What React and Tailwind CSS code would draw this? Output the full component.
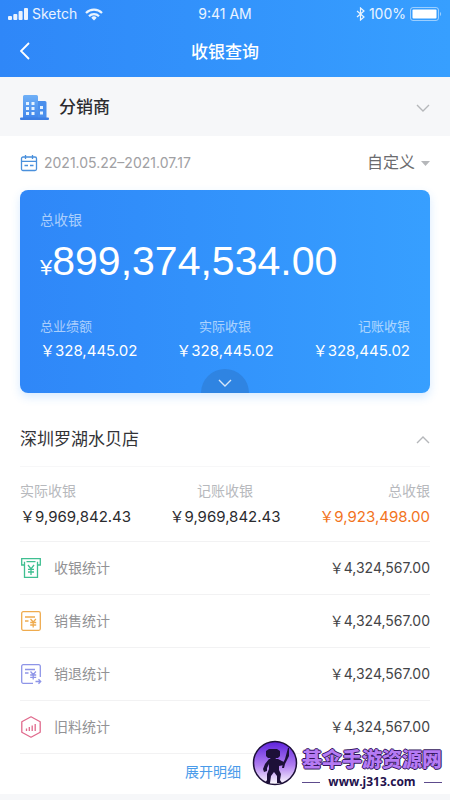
import React, { useState } from "react";

const cardStats = [
  { label: "总业绩额", value: "328,445.02", align: "items-start" },
  { label: "实际收银", value: "328,445.02", align: "items-center" },
  { label: "记账收银", value: "328,445.02", align: "items-end" },
];

const storeStats = [
  { label: "实际收银", value: "9,969,842.43", align: "items-start", color: "text-[#2b2b2e]" },
  { label: "记账收银", value: "9,969,842.43", align: "items-center", color: "text-[#2b2b2e]" },
  { label: "总收银", value: "9,923,498.00", align: "items-end", color: "text-[#f27321]" },
];

const CashIcon = () => (
  <svg width="22" height="22" viewBox="0 0 22 22" fill="none" stroke="#3fbf91" strokeWidth="1.3">
    <path d="M4.500 8H1.700V1.700h18.600V8h-2.800" />
    <path d="M4.500 4.700v15.600h13V4.700M6.500 4.700h9" />
    <path d="M8 8l3 4 3-4M11 12v6M8 12.300h6M8 15h6" />
  </svg>
);

const SaleIcon = () => (
  <svg width="22" height="22" viewBox="0 0 22 22" fill="none" stroke="#efab4e" strokeWidth="1.3">
    <rect x="1.700" y="1.700" width="18.600" height="18.600" rx="1.500" />
    <path d="M5 7h10M5 11h3.500" />
    <path d="M10.500 9l2.700 3 2.700-3M13.200 12v5.500M10.200 12.500h6M10.200 15h6" />
  </svg>
);

const ReturnIcon = () => (
  <svg width="22" height="22" viewBox="0 0 22 22" fill="none" stroke="#8e95e8" strokeWidth="1.3">
    <path d="M20.300 14V3.200a1.500 1.500 0 0 0-1.500-1.500H3.200a1.500 1.500 0 0 0-1.500 1.500v15.600a1.500 1.500 0 0 0 1.500 1.500H13" />
    <path d="M5 6.500h10M5 10h3.500" />
    <path d="M10.500 8.500l2.700 3 2.700-3M13.200 11.500v5M10.200 12h6M10.200 14.300h6" />
    <path d="M15.500 18.500h5M18.500 16.300l2.200 2.200-2.200 2.200" />
  </svg>
);

const OldIcon = () => (
  <svg width="22" height="22" viewBox="0 0 22 22" fill="none" stroke="#e0698c" strokeWidth="1.3" strokeLinejoin="round">
    <path d="M11 .8l9.200 4.900v10.600L11 21.200l-9.200-4.900V5.700z" />
    <path d="M6.500 12.500V15M9.300 11v4M12.200 9.500V15M15.200 8v7" />
  </svg>
);

const rows = [
  { label: "收银统计", value: "4,324,567.00", Icon: CashIcon },
  { label: "销售统计", value: "4,324,567.00", Icon: SaleIcon },
  { label: "销退统计", value: "4,324,567.00", Icon: ReturnIcon },
  { label: "旧料统计", value: "4,324,567.00", Icon: OldIcon },
];

const Chevron = ({ up, className }) => (
  <svg className={className} width="14" height="8" viewBox="0 0 14 8" fill="none" stroke="currentColor" strokeWidth="1.4">
    <path d={up ? "M1 7l6-6 6 6" : "M1 1l6 6 6-6"} />
  </svg>
);

const StatusBar = () => (
  <div className="grid grid-cols-3 items-center h-7 pl-2 pr-2 font-['Inter',sans-serif] text-sm text-white/90">
    <div className="flex items-center gap-1">
      <svg width="20" height="12" viewBox="0 0 20 12" fill="currentColor">
        <rect x="0" y="8" width="4" height="4" rx="1" />
        <rect x="5.300" y="6" width="4" height="6" rx="1" />
        <rect x="10.600" y="3" width="4" height="9" rx="1" />
        <rect x="16" y="0" width="4" height="12" rx="1" />
      </svg>
      <span>Sketch</span>
      <svg className="ml-1" width="18" height="13" viewBox="0 0 18 13" fill="none" stroke="currentColor" strokeWidth="2.200">
        <path d="M1 5a11.300 11.300 0 0 1 16 0M4 8.200a7 7 0 0 1 10 0" />
        <path d="M9 12.500l-2.700-2.800a3.800 3.800 0 0 1 5.400 0z" fill="currentColor" stroke="none" />
      </svg>
    </div>
    <span className="text-center">9:41 AM</span>
    <div className="flex items-center justify-end gap-1">
      <svg width="9" height="14" viewBox="0 0 9 14" fill="none" stroke="currentColor" strokeWidth="1.200">
        <path d="M1 4l7 6-3.500 3V1L8 4l-7 6" />
      </svg>
      <span>100%</span>
      <svg width="32" height="14" viewBox="0 0 32 14" fill="none">
        <rect x=".5" y=".5" width="28" height="13" rx="2.500" stroke="#fff" strokeOpacity=".5" />
        <rect x="2.500" y="2.500" width="24" height="9" rx="1" fill="#fff" />
        <path d="M30 5c1.500.6 1.500 3.400 0 4z" fill="#fff" fillOpacity=".5" />
      </svg>
    </div>
  </div>
);

const Building = () => (
  <svg width="29" height="27" viewBox="0 0 29 27">
    <defs>
      <linearGradient id="tower" x1="0" y1="0" x2="0" y2="1">
        <stop offset="0" stopColor="#6fb0f7" />
        <stop offset="1" stopColor="#3f84ea" />
      </linearGradient>
    </defs>
    <path d="M17 7h8a1.500 1.500 0 0 1 1.500 1.500V25H17z" fill="#4a8fec" />
    <path d="M3 25V2.500A1.500 1.500 0 0 1 4.500 1h12A1.500 1.500 0 0 1 18 2.500V25z" fill="url(#tower)" />
    <rect x="0" y="23.500" width="29" height="2.500" rx="1" fill="#3d7fe3" />
    <path
      d="M6 8h3v3H6zM11.500 8h3v3h-3zM6 13h3v3H6zM11.500 13h3v3h-3zM6 18h3v3H6zM11.500 18h3v3h-3zM20 12h3v3h-3zM20 17.500h3v3h-3z"
      fill="#e6f3ff"
    />
  </svg>
);

const Calendar = () => (
  <svg width="18" height="18" viewBox="0 0 18 18" fill="none" stroke="#4a90dc" strokeWidth="1.300">
    <rect x="1.500" y="3" width="15" height="13.500" rx="1.500" />
    <path d="M1.500 7.300h15M5.500 1v4M12.500 1v4M4.500 11.500h3.500M10 11.500h3.500" />
  </svg>
);

// Site badge shown over the bottom right corner
const SiteBadge = () => (
  <div className="absolute right-2 bottom-2.5 flex items-center gap-1">
    <svg className="-mt-2" width="46" height="46" viewBox="0 0 46 46">
      <defs>
        <linearGradient id="badge" x1="0" y1="0" x2="0" y2="1">
          <stop offset="0" stopColor="#5d22dc" />
          <stop offset=".55" stopColor="#b07df0" />
          <stop offset="1" stopColor="#fff" />
        </linearGradient>
      </defs>
      <circle cx="23" cy="23" r="21.500" fill="url(#badge)" stroke="#1d1038" strokeWidth="1.500" />
      <g fill="#1d1038">
        <path d="M17 9h8l3 2v5l-2 2h-2l-1 2h-4l-1-2h-2l-2-2v-5z" />
        <path d="M17 19h9l6 3v3l-5 1v4l2 4-1 6 2 3h-5v-7l-3-4-3 4-1 7h-5l2-3v-6l2-5v-5l-2 4v3l-3 1-1-3 2-5z" />
        <path d="M36 8h1v8l-4 8-1 4h-2l1-5 2-4z" />
      </g>
    </svg>
    <div className="flex flex-col items-center">
      <span className="font-['Noto_Sans_CJK_SC',sans-serif] text-xl leading-[30px] font-black text-[#b57bf3] [text-shadow:1px_0_#33165c,-1px_0_#33165c,0_1px_#33165c,0_-1px_#33165c]">
        基伞手游资源网
      </span>
      <div className="flex items-center gap-2 self-stretch">
        <span className="h-px grow bg-[#5d4b8c]" />
        <span className="font-['Open_Sans',sans-serif] text-xs leading-4 font-bold text-[#24124d]">
          www.j313.com
        </span>
        <span className="h-px grow bg-[#5d4b8c]" />
      </div>
    </div>
  </div>
);

const App = () => {
  const [open, setOpen] = useState(true);

  return (
    <div className="relative min-h-screen bg-[#f6f7f9] font-['Liberation_Sans','Noto_Sans_CJK_SC',sans-serif]">
      <header className="bg-linear-to-r from-[#2f87f8] to-[#379fff] text-white">
        <StatusBar />
        <div className="grid grid-cols-3 items-center h-[49px] px-5 pb-1">
          <button type="button" aria-label="返回" className="justify-self-start">
            <svg width="10" height="18" viewBox="0 0 10 18" fill="none" stroke="currentColor" strokeWidth="1.800">
              <path d="M9 1L1 9l8 8" />
            </svg>
          </button>
          <h1 className="pt-1 text-center text-[17px] font-medium">收银查询</h1>
        </div>
      </header>

      <button type="button" className="flex w-full items-center h-[59px] px-5 pt-0.5 bg-[#f6f7f9] text-[#2b2b2e]">
        <Building />
        <span className="ml-2.5 text-[17px] font-medium">分销商</span>
        <Chevron className="ml-auto text-[#b5b7ba]" />
      </button>

      <main className="bg-white px-5">
        <div className="flex items-center justify-between h-[54px]">
          <button type="button" className="flex items-center gap-1.5 font-['Inter',sans-serif] text-sm text-[#a0a0a3]">
            <Calendar />
            2021.05.22–2021.07.17
          </button>
          <button type="button" className="flex items-center gap-1.5 text-base text-[#6b6b6e]">
            自定义
            <svg width="9" height="5" viewBox="0 0 9 5" fill="#b5b7ba">
              <path d="M0 0h9L4.500 5z" />
            </svg>
          </button>
        </div>

        <section className="relative h-[203px] rounded-lg bg-linear-to-r from-[#2f87f8] to-[#379fff] px-5 pt-5 text-white shadow-[0_4px_10px_rgba(55,150,255,0.2)]">
          <p className="text-sm text-white/60">总收银</p>
          <p className="mt-2 flex items-baseline text-[41px] leading-[46px]">
            <span className="text-[22px]">¥</span>
            899,374,534.00
          </p>
          <div className="mt-6.5 grid grid-cols-3">
            {cardStats.map((item) => (
              <div key={item.label} className={`flex flex-col gap-1 ${item.align}`}>
                <span className="text-[13px] leading-5 text-white/60">{item.label}</span>
                <span className="font-['Inter','Noto_Sans_CJK_SC',sans-serif] text-[15px] leading-5">
                  ￥{item.value}
                </span>
              </div>
            ))}
          </div>
          <button
            type="button"
            aria-label="展开"
            className="absolute bottom-0 left-1/2 flex h-6 w-12 -translate-x-1/2 items-center justify-center rounded-t-full bg-[#2f84e2] pt-1"
          >
            <Chevron className="text-white/80" />
          </button>
        </section>

        <section className="pt-5">
          <button
            type="button"
            onClick={() => setOpen(!open)}
            className="flex w-full items-center justify-between h-[54px] border-b border-[#f7f7f8] text-[17px] text-[#333336]"
          >
            深圳罗湖水贝店
            <Chevron up={open} className="text-[#b5b7ba]" />
          </button>

          {open && (
            <>
              <div className="grid grid-cols-3 h-[75px] pt-3.5 border-b border-[#f2f2f3]">
                {storeStats.map((item) => (
                  <div key={item.label} className={`flex flex-col gap-1.5 ${item.align}`}>
                    <span className="text-sm leading-5 text-[#b7b9bd]">{item.label}</span>
                    <span
                      className={`font-['Inter','Noto_Sans_CJK_SC',sans-serif] text-[15px] leading-5 ${item.color}`}
                    >
                      ￥{item.value}
                    </span>
                  </div>
                ))}
              </div>

              <ul>
                {rows.map(({ label, value, Icon }) => (
                  <li key={label} className="flex items-center h-[53px] border-b border-[#f2f2f3]">
                    <Icon />
                    <span className="ml-3 text-sm text-[#929295]">{label}</span>
                    <span className="ml-auto font-['Inter','Noto_Sans_CJK_SC',sans-serif] text-sm text-[#444447]">
                      ￥{value}
                    </span>
                  </li>
                ))}
              </ul>
            </>
          )}

          <button type="button" className="block w-full h-10 pr-6 pb-1 text-sm text-[#4a9bea]">
            展开明细
          </button>
        </section>
      </main>

      <SiteBadge />
    </div>
  );
};

export default App;
